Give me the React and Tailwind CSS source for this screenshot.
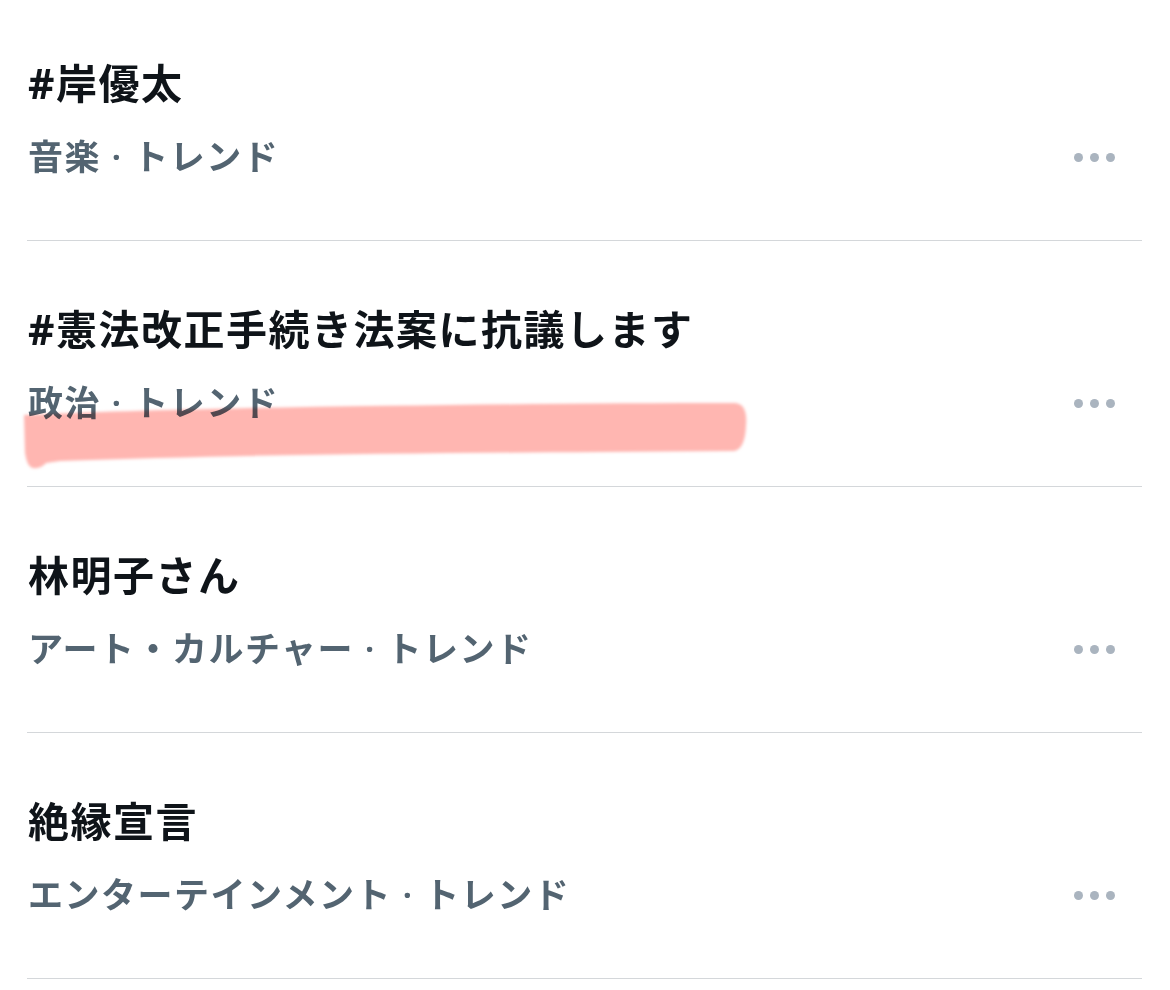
import React from "react";

const trends = [
  { title: "#岸優太", meta: "音楽 · トレンド" },
  { title: "#憲法改正手続き法案に抗議します", meta: "政治 · トレンド", marked: true },
  { title: "林明子さん", meta: "アート・カルチャー · トレンド" },
  { title: "絶縁宣言", meta: "エンターテインメント · トレンド" },
];

const MoreDots = () => (
  <div className="flex items-center gap-[7px] mr-[55px]">
    <span className="w-[9px] h-[9px] rounded-full bg-[#aab4bf]" />
    <span className="w-[9px] h-[9px] rounded-full bg-[#aab4bf]" />
    <span className="w-[9px] h-[9px] rounded-full bg-[#aab4bf]" />
  </div>
);

// pink highlighter stroke drawn over the second row
const Highlighter = () => (
  <svg
    className="absolute left-0 top-[154px] mix-blend-multiply pointer-events-none"
    width="770"
    height="90"
    viewBox="0 0 770 90"
  >
    <defs>
      <filter id="soft" x="-5%" y="-20%" width="110%" height="140%">
        <feGaussianBlur stdDeviation="1.6" />
      </filter>
    </defs>
    <path
      d="M 24 20 C 90 17 160 15 250 13 C 420 10 600 8 735 8 Q 748 9 746 31 Q 745 54 734 56 L 600 57 C 420 58 220 60 60 66 L 46 68 Q 41 74 33 73 Q 27 72 25 58 Z"
      fill="#ffb6b1"
      filter="url(#soft)"
    />
  </svg>
);

export default function App() {
  return (
    <div
      className="bg-white min-h-screen w-[1170px] overflow-hidden"
      style={{ fontFamily: '"Noto Sans", "Noto Sans CJK JP", sans-serif' }}
    >
      <div className="-mt-[5px]">
        {trends.map((t) => (
          <div key={t.title} className="relative h-[246px] pl-[28px] pt-[64px]">
            <h2 className="text-[41px] leading-[48px] font-bold text-[#0f1419] tracking-[1.5px]">
              {t.title}
            </h2>
            <div className="flex items-center justify-between mt-[26px] h-[48px]">
              <p className="text-[35px] leading-[48px] font-semibold text-[#536471] tracking-[1.5px]">
                {t.meta}
              </p>
              <MoreDots />
            </div>
            {t.marked && <Highlighter />}
            <div className="absolute left-[27px] right-[28px] bottom-0 h-px bg-[#d4d7da]" />
          </div>
        ))}
      </div>
    </div>
  );
}
